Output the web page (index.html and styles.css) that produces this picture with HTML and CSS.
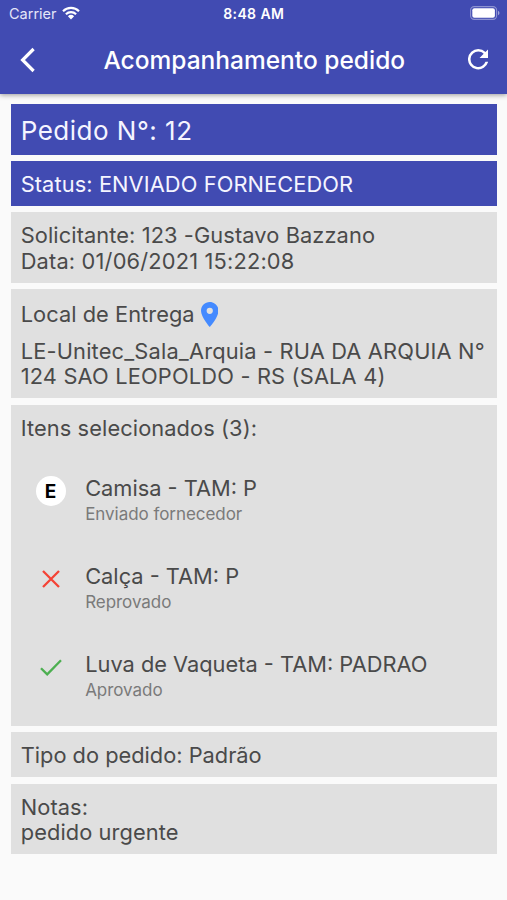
FILE: index.html
```html
<!DOCTYPE html>
<html lang="pt-BR">
<head>
    <meta charset="utf-8">
    <title>Acompanhamento pedido</title>
    <link rel="stylesheet" href="styles.css">
</head>
<body>
    <header class="header">
        <div class="statusbar">
            <div class="carrier">
                <span>Carrier</span>
                <svg class="wifi" viewBox="0 0 18 14">
                    <path d="M1 5.2a11.5 11.5 0 0 1 16 0M3.9 8.2a7.4 7.4 0 0 1 10.2 0" fill="none" stroke="#fff" stroke-width="2.2"/>
                    <path d="M9 13.4L5.9 10.3a4.5 4.5 0 0 1 6.2 0z" fill="#fff"/>
                </svg>
            </div>
            <div class="clock">8:48 AM</div>
            <svg class="battery" viewBox="0 0 30 14">
                <rect x="0.6" y="0.6" width="26" height="12.8" rx="3.6" fill="none" stroke="#fff" stroke-opacity="0.4" stroke-width="1.1"/>
                <rect x="2.3" y="2.3" width="22.6" height="9.4" rx="2" fill="#fff"/>
                <path d="M28 4.8c2 .8 2 3.6 0 4.4z" fill="#fff" fill-opacity="0.5"/>
            </svg>
        </div>
        <div class="navbar">
            <svg class="back" viewBox="0 0 16 26">
                <path d="M13.6 2L2.6 13l11 11" fill="none" stroke="#fff" stroke-width="3.2"/>
            </svg>
            <h1 class="title">Acompanhamento pedido</h1>
            <svg class="refresh" viewBox="4 4 16 16">
                <path d="M17.65 6.35A7.96 7.96 0 0 0 12 4a8 8 0 1 0 7.73 10h-2.08A6 6 0 1 1 12 6c1.66 0 3.14.69 4.22 1.78L13 11h7V4z" fill="#fff"/>
            </svg>
        </div>
    </header>
    <main class="content">
        <div class="card blue number">Pedido N°: 12</div>
        <div class="card blue status">Status: ENVIADO FORNECEDOR</div>
        <div class="card">
            <div class="requester">Solicitante: 123 -Gustavo Bazzano</div>
            <div class="date">Data: 01/06/2021 15:22:08</div>
        </div>
        <div class="card">
            <div class="place">
                <span>Local de Entrega</span>
                <svg class="pin" viewBox="5 2 14 20">
                    <path d="M12 2C8.13 2 5 5.13 5 9c0 5.25 7 13 7 13s7-7.75 7-13c0-3.87-3.13-7-7-7zm0 9.5a2.5 2.5 0 0 1 0-5 2.5 2.5 0 0 1 0 5z" fill="#448aff"/>
                </svg>
            </div>
            <div class="address">LE-Unitec_Sala_Arquia - RUA DA ARQUIA N°<br>124 SAO LEOPOLDO - RS (SALA 4)</div>
        </div>
        <div class="card items">
            <div>Itens selecionados (3):</div>
            <div class="item">
                <div class="icon"><div class="letter">E</div></div>
                <div>
                    <div class="name">Camisa - TAM: P</div>
                    <div class="state">Enviado fornecedor</div>
                </div>
            </div>
            <div class="item">
                <div class="icon">
                    <svg class="cross" viewBox="0 0 18 18"><path d="M1 1l16 16M17 1L1 17" fill="none" stroke="#f44336" stroke-width="2.3"/></svg>
                </div>
                <div>
                    <div class="name">Calça - TAM: P</div>
                    <div class="state">Reprovado</div>
                </div>
            </div>
            <div class="item">
                <div class="icon">
                    <svg class="check" viewBox="0 0 22 17"><path d="M1 9.2l6.2 6.2L21 1.2" fill="none" stroke="#4caf50" stroke-width="2.3"/></svg>
                </div>
                <div>
                    <div class="name">Luva de Vaqueta - TAM: PADRAO</div>
                    <div class="state">Aprovado</div>
                </div>
            </div>
        </div>
        <div class="card type">Tipo do pedido: Padrão</div>
        <div class="card">Notas:<br>pedido urgente</div>
    </main>
</body>
</html>
```
FILE: styles.css
```css
*{
    box-sizing: border-box;
}
body{
    margin: 0;
    height: 900px;
    background-color: #fafafa;
    font-family: Inter, "Liberation Sans", sans-serif;
    color: #4a4a4a;
    overflow: hidden;
}
svg{
    display: block;
}
.header{
    height: 94px;
    background-color: #414bb2;
    color: white;
    box-shadow: 0 1px 5px rgba(0,0,0,0.4);
}
.statusbar{
    height: 26px;
    padding: 1px 7px 0 9px;
    display: grid;
    grid-template-columns: 1fr auto 1fr;
    align-items: center;
    font-size: 14.5px;
}
.carrier{
    display: flex;
    align-items: center;
    gap: 5px;
    color: #e4e6f8;
}
.wifi{
    width: 18px;
    height: 14px;
    margin-top: -1px;
}
.clock{
    font-weight: 600;
    font-size: 14px;
    letter-spacing: 0.4px;
    margin-left: -1.5px;
}
.battery{
    width: 30px;
    height: 14px;
    justify-self: end;
    margin-top: -1px;
}
.navbar{
    height: 67px;
    padding: 0 19px 0 20px;
    display: flex;
    align-items: center;
    justify-content: space-between;
}
.back{
    width: 16px;
    height: 26px;
}
.title{
    margin: 0 0 0 5px;
    font-size: 24.5px;
    font-weight: 500;
    letter-spacing: 0;
}
.refresh{
    width: 20.5px;
    height: 20.5px;
}
.content{
    padding: 9.7px 10px 0 10.7px;
    display: flex;
    flex-direction: column;
    gap: 6.4px;
}
.card{
    background-color: #e0e0e0;
    padding: 11px 10px 8.2px;
    font-size: 21.8px;
    line-height: 25.7px;
    letter-spacing: 0.1px;
    white-space: nowrap;
}
.blue{
    background-color: #414bb2;
    color: #f5f5ff;
}
.number{
    font-size: 26px;
    line-height: 31.7px;
    letter-spacing: 0.5px;
}
.date, .address{
    letter-spacing: 0.18px;
}
.place{
    display: flex;
    align-items: center;
    gap: 6px;
    height: 29px;
    margin-bottom: 9.5px;
    letter-spacing: 0.05px;
}
.pin{
    width: 17.5px;
    height: 25px;
}
.items{
    height: 321.3px;
}
.item{
    height: 88px;
    padding: 34.5px 0 0 14px;
    display: flex;
    gap: 18.5px;
}
.icon{
    width: 32px;
    height: 32px;
    margin-top: -0.5px;
    display: flex;
    align-items: center;
    justify-content: center;
}
.letter{
    width: 30px;
    height: 30px;
    border-radius: 50%;
    background-color: white;
    color: black;
    font-size: 19px;
    line-height: 31px;
    font-weight: 700;
    text-align: center;
}
.cross{
    width: 18px;
    height: 18px;
}
.check{
    width: 22px;
    height: 17px;
}
.name, .type{
    letter-spacing: 0;
}
.state{
    font-size: 17px;
    letter-spacing: -0.05px;
    color: #7a7a7a;
}
```
